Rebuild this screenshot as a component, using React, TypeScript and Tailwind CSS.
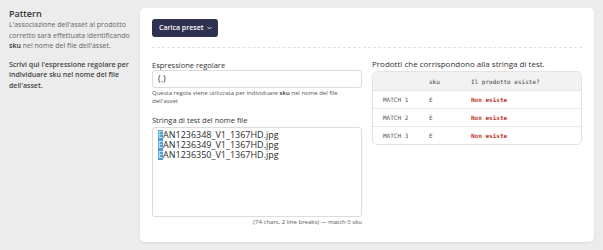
import { ReactNode } from 'react';

const MATCHES = [
  { label: 'MATCH 1', sku: 'E', status: 'Non esiste' },
  { label: 'MATCH 2', sku: 'E', status: 'Non esiste' },
  { label: 'MATCH 3', sku: 'E', status: 'Non esiste' },
];

const FILES = ['AN1236348_V1_1367HD.jpg', 'AN1236349_V1_1367HD.jpg', 'AN1236350_V1_1367HD.jpg'];

function Label({ children }: { children: ReactNode }) {
  return <div className="h-[10px] text-[7.5px] leading-[10px] text-[#333]">{children}</div>;
}

export default function App() {
  return (
    <div className="flex h-[250px] w-[603px] bg-[#ececec] pt-2 font-['Open_Sans',sans-serif]">
      {/* Sidebar */}
      <div className="w-[140px] shrink-0 pl-[9px] pr-[10px]">
        <h2 className="text-[9px] font-semibold leading-[12px] text-[#333]">Pattern</h2>
        <p className="text-[7px] leading-[10.5px] text-[#666]">
          L'associazione dell'asset al prodotto corretto sarà effettuata identificando{' '}
          <b className="font-semibold text-[#333]">sku</b> nel nome del file dell'asset.
        </p>
        <p className="mt-[8px] text-[7px] font-semibold leading-[10.5px] text-[#444]">
          Scrivi qui l'espressione regolare per individuare sku nel nome del file dell'asset.
        </p>
      </div>

      {/* Card */}
      <div className="h-[234px] w-[454px] shrink-0 rounded-[5px] bg-white px-[12px] pt-[11px] shadow-[0_1px_2px_rgba(0,0,0,0.08)]">
        <button className="flex h-[18px] w-[66px] items-center gap-[4px] rounded-[3px] bg-[#2e3250] pl-[7px] text-[7px] font-semibold text-white">
          Carica preset
          <svg width="5" height="4" viewBox="0 0 10 6" fill="none" stroke="white" strokeWidth="1.6">
            <path d="M1 1l4 4 4-4" />
          </svg>
        </button>

        <div className="mt-[10px] border-t border-dashed border-[#e2e2e2]" />

        <div className="mt-[12px] grid grid-cols-2 gap-[10px]">
          {/* Left column */}
          <div>
            <Label>Espressione regolare</Label>
            <div className="flex h-[18px] items-center rounded-[3px] border border-[#dcdcdc] px-[5px] text-[9px] text-[#333]">
              (.)
            </div>
            <p className="mt-[1px] text-[6px] leading-[8px] text-[#555]">
              Questa regola viene utilizzata per individuare <span className="font-semibold text-[#333]">sku</span> nel nome del file dell'asset
            </p>
            <div className="mt-[10px]">
              <Label>Stringa di test del nome file</Label>
            </div>
            <div className="mt-[2px] h-[90px] rounded-[3px] border border-[#dcdcdc] pl-[5px] pt-[2px] text-[9px] leading-[10px] text-[#2b2b2b]">
              {FILES.map((f) => (
                <div key={f} className="h-[10px]">
                  <span className="inline-block h-[10px] bg-[#4a9fd4] leading-[10px] text-[#dff0fb]">E</span>
                  {f}
                </div>
              ))}
            </div>
            <div className="mt-[1px] text-right text-[6px] leading-[8px] text-[#555]">
              (74 chars, 2 line breaks) — match 0 sku
            </div>
          </div>

          {/* Right column */}
          <div>
            <div className="-mt-[1px] h-[10px] text-[8px] leading-[10px] text-[#333]">
              Prodotti che corrispondono alla stringa di test.
            </div>
            <div className="mt-[2px] overflow-hidden rounded-[5px] border border-[#e3e3e3] font-['DejaVu_Sans_Mono',monospace] text-[6px]">
              <div className="flex h-[18px] items-center bg-[#f2f2f2] pl-[10px] text-[#444]">
                <span className="w-[46px]" />
                <span className="w-[42px]">sku</span>
                <span>Il prodotto esiste?</span>
              </div>
              {MATCHES.map((m) => (
                <div key={m.label} className="flex h-[18px] items-center border-t border-[#e8e8e8] pl-[10px]">
                  <span className="w-[46px] text-[#555]">{m.label}</span>
                  <span className="w-[42px] text-[#555]">{m.sku}</span>
                  <span className="font-bold text-[#c0392b]">{m.status}</span>
                </div>
              ))}
            </div>
          </div>
        </div>
      </div>
    </div>
  );
}
